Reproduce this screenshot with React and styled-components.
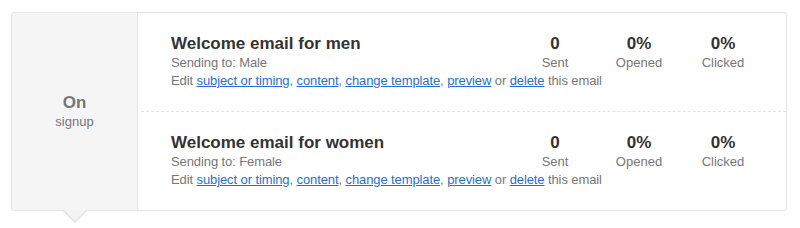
import React from 'react';
import styled, { createGlobalStyle } from 'styled-components';

const GlobalStyle = createGlobalStyle`
  html, body {
    margin: 0;
    padding: 0;
    background: #fff;
  }
  body {
    font-family: "Liberation Sans", Arial, Helvetica, sans-serif;
    color: #333;
  }
`;

const Page = styled.div`
  padding: 12px 13px 24px 11px;
`;

const Card = styled.section`
  position: relative;
  display: flex;
  border: 1px solid #e4e4e4;
  border-radius: 3px;
  background: #fff;
`;

const Trigger = styled.div`
  position: relative;
  width: 125px;
  flex-shrink: 0;
  display: flex;
  flex-direction: column;
  align-items: center;
  justify-content: center;
  background: #f5f5f5;
  border-right: 1px solid #e6e6e6;
  border-radius: 3px 0 0 3px;
  color: #777;
  padding-top: 1px;

  &::before,
  &::after {
    content: '';
    position: absolute;
    left: 50%;
    width: 0;
    height: 0;
    transform: translateX(-50%);
    z-index: 2;
  }

  &::before {
    top: calc(100% + 1px);
    border-left: 12px solid transparent;
    border-right: 12px solid transparent;
    border-top: 12px solid #e2e2e2;
  }

  &::after {
    top: 100%;
    border-left: 11px solid transparent;
    border-right: 11px solid transparent;
    border-top: 11px solid #f3f3f3;
  }
`;

const TriggerTitle = styled.div`
  font-size: 17px;
  font-weight: bold;
  line-height: 20px;
`;

const TriggerLabel = styled.div`
  font-size: 13px;
  line-height: 18px;
`;

const Emails = styled.div`
  flex: 1;
  display: flex;
  flex-direction: column;
  padding-left: 3px;
`;

const Row = styled.div`
  display: grid;
  grid-template-columns: minmax(0, 1fr) auto;
  align-items: start;
  padding: 21px 21px 21px 30px;
  border-top: ${(p) => (p.$first ? 'none' : '1px dashed #e3e3e3')};
`;

const Info = styled.div`
  white-space: nowrap;
`;

const Title = styled.h3`
  margin: 0;
  font-size: 17px;
  font-weight: bold;
  line-height: 20px;
  color: #333;
`;

const Meta = styled.div`
  font-size: 13px;
  line-height: 18px;
  color: #777;
  letter-spacing: -0.1px;
`;

const Link = styled.a`
  color: #1f6fd6;
  text-decoration: underline;
  cursor: pointer;
`;

const Stats = styled.div`
  display: flex;
`;

const Stat = styled.div`
  width: 84px;
  text-align: center;
`;

const StatValue = styled.div`
  font-size: 17px;
  font-weight: bold;
  line-height: 20px;
  color: #333;
`;

const StatLabel = styled.div`
  font-size: 13px;
  line-height: 18px;
  color: #777;
`;

const emails = [
  { title: 'Welcome email for men', segment: 'Male', sent: '0', opened: '0%', clicked: '0%' },
  { title: 'Welcome email for women', segment: 'Female', sent: '0', opened: '0%', clicked: '0%' },
];

const EmailRow = ({ email, first }) => (
  <Row $first={first}>
    <Info>
      <Title>{email.title}</Title>
      <Meta>Sending to: {email.segment}</Meta>
      <Meta>
        Edit <Link>subject or timing</Link>, <Link>content</Link>,{' '}
        <Link>change template</Link>, <Link>preview</Link> or <Link>delete</Link> this email
      </Meta>
    </Info>
    <Stats>
      <Stat>
        <StatValue>{email.sent}</StatValue>
        <StatLabel>Sent</StatLabel>
      </Stat>
      <Stat>
        <StatValue>{email.opened}</StatValue>
        <StatLabel>Opened</StatLabel>
      </Stat>
      <Stat>
        <StatValue>{email.clicked}</StatValue>
        <StatLabel>Clicked</StatLabel>
      </Stat>
    </Stats>
  </Row>
);

const App = () => (
  <>
    <GlobalStyle />
    <Page>
      <Card>
        <Trigger>
          <TriggerTitle>On</TriggerTitle>
          <TriggerLabel>signup</TriggerLabel>
        </Trigger>
        <Emails>
          {emails.map((email, i) => (
            <EmailRow key={email.title} email={email} first={i === 0} />
          ))}
        </Emails>
      </Card>
    </Page>
  </>
);

export default App;
